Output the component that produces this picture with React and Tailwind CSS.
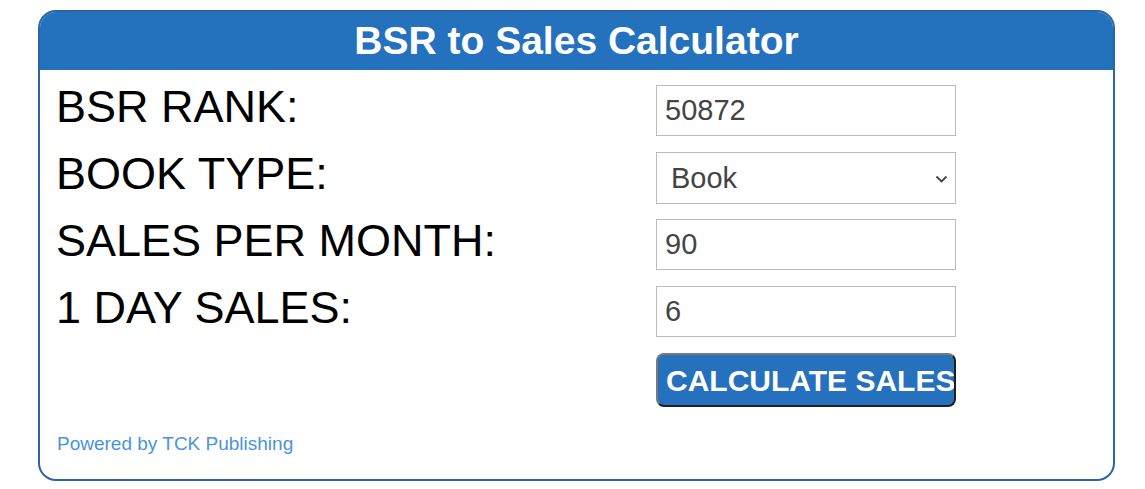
import React, { useState } from "react";

const font = { fontFamily: '"Liberation Sans", Arial, sans-serif' };

function Row({ label, children }) {
  return (
    <div className="flex items-start h-[67px]">
      <div className="w-[599px] text-[45px] leading-[51px] text-black mt-[-4px] ml-[-1px]">
        {label}
      </div>
      <div className="w-[300px] ml-[1px]">{children}</div>
    </div>
  );
}

export default function App() {
  const [rank, setRank] = useState("50872");
  const [type, setType] = useState("book");

  return (
    <div className="bg-white w-[1145px] h-[489px] pt-[10px] pl-[38px]" style={font}>
      <div className="w-[1077px] h-[471px] border-2 border-[#2b66a2] rounded-[18px] overflow-hidden flex flex-col">
        <div className="h-[58px] bg-[#2471be] flex items-center justify-center">
          <h1 className="text-white font-bold text-[39px] leading-none mt-[-2px]">
            BSR to Sales Calculator
          </h1>
        </div>
        <div className="pl-[17px] pt-[15px]">
          <Row label="BSR RANK:">
            <input
              value={rank}
              onChange={(e) => setRank(e.target.value)}
              className="w-[300px] h-[51px] border border-[#bbbbbb] px-[8px] text-[29px] text-[#444] outline-none"
              style={font}
            />
          </Row>
          <Row label="BOOK TYPE:">
            <div className="relative w-[300px] h-[52px]">
              <select
                value={type}
                onChange={(e) => setType(e.target.value)}
                className="appearance-none w-[300px] h-[52px] border border-[#bbbbbb] pl-[14px] pt-[2px] text-[29px] text-[#444] bg-white outline-none"
                style={font}
              >
                <option value="book">Book</option>
                <option value="ebook">eBook</option>
              </select>
              <svg
                className="absolute right-[8px] top-[23px] pointer-events-none"
                width="13"
                height="8"
                viewBox="0 0 13 8"
                fill="none"
                stroke="#444"
                strokeWidth="1.8"
              >
                <path d="M1.5 1.5l5 5 5-5" />
              </svg>
            </div>
          </Row>
          <Row label="SALES PER MONTH:">
            <input
              value="90"
              readOnly
              className="w-[300px] h-[51px] border border-[#bbbbbb] px-[8px] text-[29px] text-[#444] outline-none"
              style={font}
            />
          </Row>
          <Row label="1 DAY SALES:">
            <input
              value="6"
              readOnly
              className="w-[300px] h-[51px] border border-[#bbbbbb] px-[8px] text-[29px] text-[#444] outline-none"
              style={font}
            />
          </Row>
          <div className="flex">
            <div className="w-[599px]"></div>
            <button
              className="w-[300px] h-[54px] bg-[#2571bd] text-white font-bold text-[30px] rounded-[8px] border-2 border-t-[#7a7a7a] border-l-[#7a7a7a] border-b-[#1f1f1f] border-r-[#1f1f1f] overflow-hidden whitespace-nowrap text-left pl-[8px]"
              style={font}
            >
              CALCULATE SALES
            </button>
          </div>
          <div className="mt-[23px]">
            <a href="#" className="text-[19px] text-[#4a94dc]">
              Powered by TCK Publishing
            </a>
          </div>
        </div>
      </div>
    </div>
  );
}
